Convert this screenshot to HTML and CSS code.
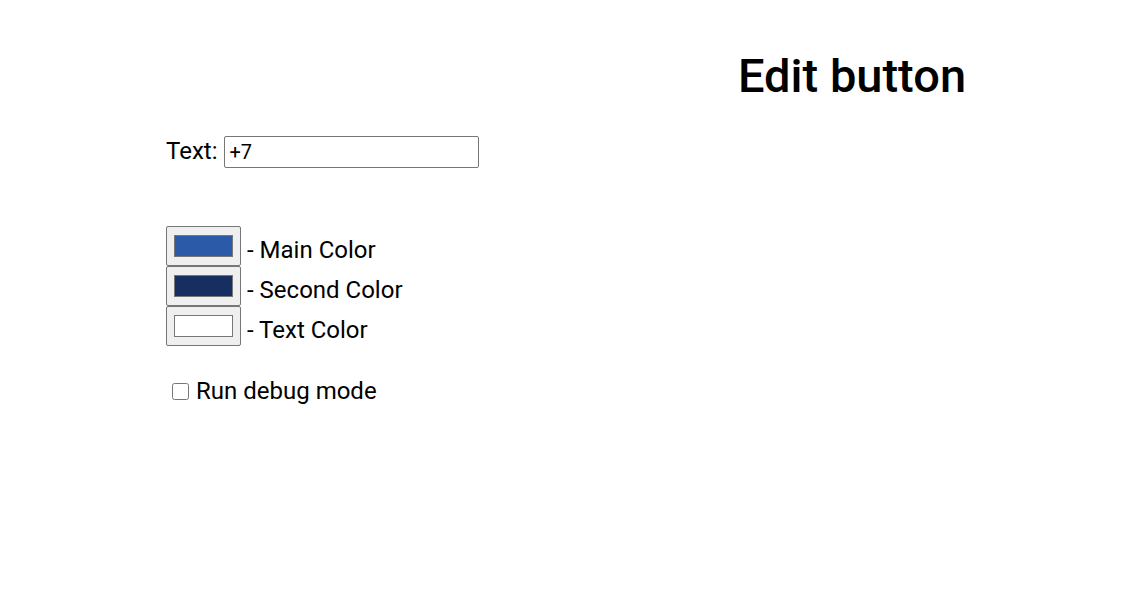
FILE: index.html
```html
<!DOCTYPE html>
<html>
<head>
<meta charset="utf-8">
<link rel="stylesheet" href="styles.css">
</head>
<body>
<div class="page">
  <h1 class="title">Edit button</h1>
  <div class="form">
    <label class="text-row">Text: <input class="text-input" type="text" value="+7"></label>
    <div class="colors">
      <div class="color-row"><input class="color-input" type="color" value="#2b5ba8"><span class="color-label">- Main Color</span></div>
      <div class="color-row"><input class="color-input" type="color" value="#172f60"><span class="color-label">- Second Color</span></div>
      <div class="color-row"><input class="color-input" type="color" value="#ffffff"><span class="color-label">- Text Color</span></div>
    </div>
    <label class="debug-row"><input class="check" type="checkbox"><span>Run debug mode</span></label>
  </div>
</div>
</body>
</html>
```
FILE: styles.css
```css
html, body {
  margin: 0;
  padding: 0;
  background: #fff;
}
body {
  font-family: Roboto, "Liberation Sans", sans-serif;
  color: #000;
}
.page {
  padding: 48px 0 0 166px;
}
.title {
  margin: 0 0 0 572px;
  font-size: 47px;
  font-weight: 500;
  line-height: 56px;
}
.form {
  display: flex;
  flex-direction: column;
  align-items: flex-start;
  margin-top: 32px;
  font-size: 24px;
}
.text-row {
  display: flex;
  align-items: baseline;
  gap: 7px;
}
.text-input {
  width: 255px;
  height: 32px;
  box-sizing: border-box;
  border: 1px solid #767676;
  border-radius: 2px;
  padding: 1px 4px;
  font-family: Roboto, "Liberation Sans", sans-serif;
  font-size: 20px;
  color: #000;
}
.colors {
  display: flex;
  flex-direction: column;
  margin-top: 58px;
}
.color-row {
  display: flex;
  align-items: center;
  gap: 6px;
}
.color-label {
  position: relative;
  top: 4px;
}
.color-input {
  width: 75px;
  height: 40px;
  box-sizing: border-box;
  margin: 0;
  padding: 0;
  border: 1px solid #767676;
  border-radius: 2px;
  background: #efefef;
  cursor: pointer;
}
.color-input::-webkit-color-swatch-wrapper {
  padding: 8px 7px;
}
.color-input::-webkit-color-swatch {
  border: 1px solid #777;
  border-radius: 0;
}
.debug-row {
  display: flex;
  align-items: center;
  gap: 7px;
  margin-top: 31px;
  margin-left: 6px;
}
.check {
  width: 17px;
  height: 17px;
  margin: 0;
}
```
